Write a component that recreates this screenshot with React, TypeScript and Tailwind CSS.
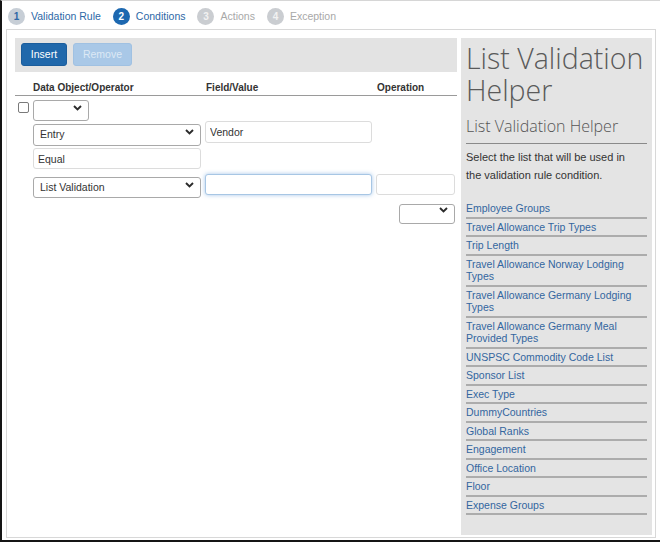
import React from "react";

const TABS = [
  { n: 1, label: "Validation Rule", state: "done" },
  { n: 2, label: "Conditions", state: "active" },
  { n: 3, label: "Actions", state: "off" },
  { n: 4, label: "Exception", state: "off" },
];

const LISTS = [
  "Employee Groups",
  "Travel Allowance Trip Types",
  "Trip Length",
  "Travel Allowance Norway Lodging Types",
  "Travel Allowance Germany Lodging Types",
  "Travel Allowance Germany Meal Provided Types",
  "UNSPSC Commodity Code List",
  "Sponsor List",
  "Exec Type",
  "DummyCountries",
  "Global Ranks",
  "Engagement",
  "Office Location",
  "Floor",
  "Expense Groups",
];

function Chevron() {
  return (
    <svg width="9" height="6" viewBox="0 0 9 6" className="pointer-events-none absolute right-[7px] top-1/2 -translate-y-1/2">
      <path d="M1 1 L4.5 4.5 L8 1" fill="none" stroke="#2b2b2b" strokeWidth="1.9" />
    </svg>
  );
}

function Select({ value, className }: { value: string; className: string }) {
  return (
    <div className={`relative ${className}`}>
      <select
        defaultValue={value}
        className="h-full w-full appearance-none rounded-[3px] border border-[#a9a9a9] bg-white pl-[6px] text-[10.5px] text-[#333] outline-none"
      >
        <option>{value}</option>
      </select>
      <Chevron />
    </div>
  );
}

function Field({ value, className, focused }: { value: string; className: string; focused?: boolean }) {
  return (
    <input
      defaultValue={value}
      className={`${className} rounded-[3px] border bg-white pl-[4px] text-[10.5px] text-[#333] outline-none ${
        focused ? "border-[#a7c6e4] shadow-[0_0_4px_rgba(90,150,215,0.55)]" : "border-[#dcdcdc]"
      }`}
    />
  );
}

export default function App() {
  return (
    <div className="h-[542px] w-[660px] overflow-hidden border-b-2 border-l-2 border-t border-b-[#151515] border-l-[#151515] border-t-[#d6d6d6] bg-white font-['Liberation_Sans',Arial,sans-serif]">
      {/* Step tabs */}
      <div className="flex h-[28px] items-center pl-[6px] pt-[3px]">
        {TABS.map((t, i) => (
          <div key={t.n} className={`flex items-center gap-[6px] ${i > 0 ? "ml-[12px]" : ""}`}>
            <span
              className={`flex h-[17px] w-[17px] items-center justify-center rounded-full text-[10px] font-bold ${
                t.state === "active"
                  ? "bg-[#1d68b0] text-white"
                  : t.state === "done"
                  ? "bg-[#c7ced6] text-[#2e68a6]"
                  : "bg-[#cacdd1] text-[#f2f2f2]"
              }`}
            >
              {t.n}
            </span>
            <span className={`text-[10.5px] ${t.state === "off" ? "text-[#a8a8a8]" : "text-[#2d68a6]"}`}>{t.label}</span>
          </div>
        ))}
      </div>

      <div className="ml-[4px] flex h-[509px] w-[650px] gap-[4px] border border-[#d8d8d8] pl-[8px] pt-[8px]">
        {/* Conditions editor */}
        <div className="w-[442px]">
          <div className="flex h-[34px] items-start gap-[6px] bg-[#e3e3e3] pl-[6px] pt-[5px]">
            <button className="h-[23px] w-[46px] rounded-[3px] border border-[#1b5d9c] bg-[#2068ab] text-[10.5px] text-white">Insert</button>
            <button className="h-[23px] w-[59px] rounded-[3px] border border-[#a0c1e2] bg-[#a9c8e7] text-[10.5px] text-[#dde9f5]">Remove</button>
          </div>

          <div className="grid grid-cols-[18px_172px_171px_81px] border-b border-[#9a9a9a] pb-[1px] pt-[9px] text-[10px] font-bold leading-[13px] text-[#333]">
            <span />
            <span>Data Object/Operator</span>
            <span className="pl-[1px]">Field/Value</span>
            <span className="pl-[1px]">Operation</span>
          </div>

          <div className="mt-[1px] grid grid-cols-[18px_172px_171px_81px] items-center">
            <span className="ml-[3px] h-[11px] w-[11px] rounded-[2px] border border-[#7a7a7a] bg-white" />
            <Select value="" className="h-[21px] w-[56px]" />
          </div>
          <div className="mt-[3px] grid grid-cols-[18px_172px_171px_81px]">
            <span />
            <Select value="Entry" className="h-[22px] w-[168px]" />
            <Field value="Vendor" className="h-[22px] w-[167px]" />
          </div>
          <div className="mt-[5px] grid grid-cols-[18px_172px_171px_81px]">
            <span />
            <Field value="Equal" className="h-[21px] w-[168px]" />
          </div>
          <div className="mt-[5px] grid grid-cols-[18px_172px_171px_81px]">
            <span />
            <Select value="List Validation" className="h-[21px] w-[168px]" />
            <Field value="" focused className="h-[21px] w-[167px]" />
            <Field value="" className="h-[21px] w-[79px]" />
          </div>
          <div className="mt-[5px] flex justify-end pr-[2px]">
            <Select value="" className="h-[20px] w-[56px]" />
          </div>
        </div>

        {/* Helper panel */}
        <div className="h-[497px] w-[191px] bg-[#e4e4e4] px-[5px] pt-[4px]">
          <h1 className="font-['Open_Sans',sans-serif] text-[28.5px] font-light leading-[32px] text-[#5a5a5a]">List Validation Helper</h1>
          <h2 className="mt-[10px] border-b border-[#8a8a8a] pb-[7px] font-['Open_Sans',sans-serif] text-[16px] font-light leading-[20px] text-[#555]">
            List Validation Helper
          </h2>
          <p className="mt-[4px] max-w-[172px] text-[11px] leading-[18px] text-[#333]">
            Select the list that will be used in the validation rule condition.
          </p>
          <ul className="mt-[16px]">
            {LISTS.map((l) => (
              <li key={l} className="border-b-2 border-[#acacac] py-[2px] text-[10.5px] leading-[12.5px] text-[#33669f]">
                {l}
              </li>
            ))}
          </ul>
        </div>
      </div>
    </div>
  );
}
